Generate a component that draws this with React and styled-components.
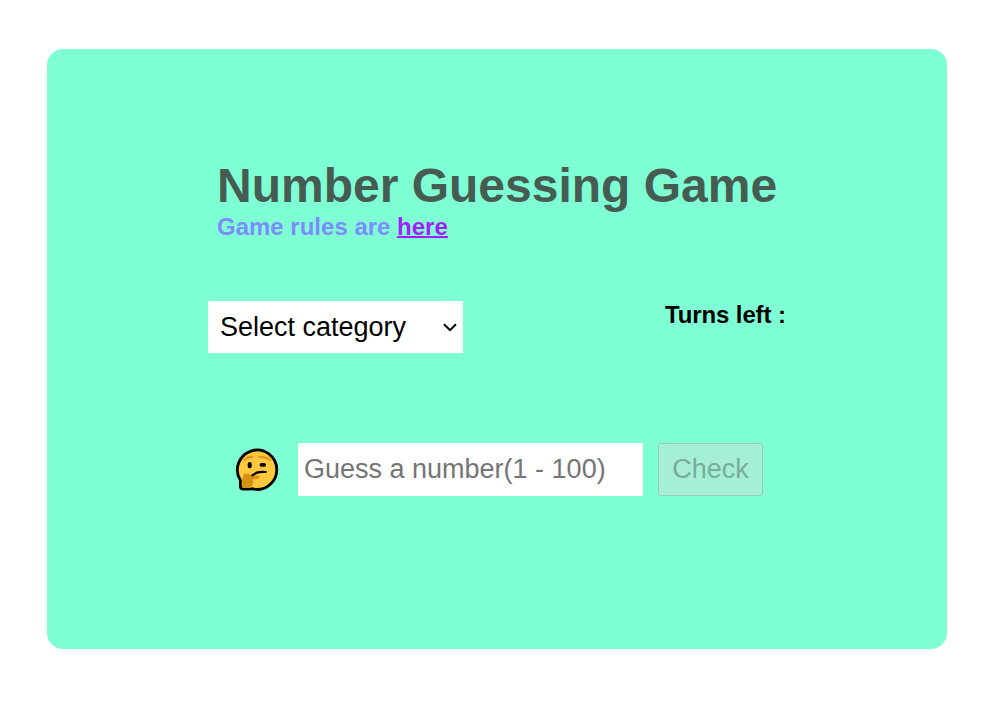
import React from "react";
import styled, { createGlobalStyle } from "styled-components";

const GlobalStyle = createGlobalStyle`
  * { box-sizing: border-box; }
  body {
    margin: 0;
    background: #fff;
    font-family: "Liberation Sans", Arial, sans-serif;
  }
`;

const Page = styled.div`
  height: 702px;
  padding: 49px 0 0 47px;
`;

const Card = styled.main`
  width: 900px;
  height: 600px;
  padding: 109px 161px 0;
  border-radius: 16px;
  background: #7fffd4;
`;

const Header = styled.header`
  padding-left: 9px;
  white-space: nowrap;
`;

const Title = styled.h1`
  margin: 0;
  font-size: 48px;
  line-height: 55px;
  color: #465c53;
`;

const Rules = styled.p`
  margin: 0;
  font-size: 24px;
  font-weight: bold;
  line-height: 28px;
  color: #7b8cff;
`;

const RulesLink = styled.a`
  color: #a41dfb;
  text-decoration: underline;
  text-decoration-thickness: 2px;
`;

const Options = styled.section`
  display: flex;
  justify-content: space-between;
  margin-top: 60px;
`;

const SelectWrap = styled.div`
  position: relative;
  width: 255px;
  height: 52px;
`;

const Select = styled.select`
  appearance: none;
  width: 100%;
  height: 100%;
  padding: 0 30px 0 12px;
  border: 0;
  border-radius: 0;
  background: #fff;
  color: #000;
  font: 27px "Liberation Sans", Arial, sans-serif;
`;

const Chevron = styled.svg`
  position: absolute;
  right: 6px;
  top: 22px;
  pointer-events: none;
`;

const Turns = styled.p`
  margin: 0 -2px 0 0;
  width: 123px;
  font-size: 24px;
  font-weight: bold;
  letter-spacing: -0.12px;
  line-height: 28px;
  white-space: nowrap;
`;

const GuessRow = styled.form`
  display: flex;
  align-items: center;
  margin: 90px 0 0 27px;
`;

const Face = styled.svg`
  flex: none;
  margin-right: 18px;
`;

const GuessInput = styled.input`
  width: 345px;
  height: 53px;
  margin-right: 15px;
  padding: 0 6px;
  border: 0;
  background: #fff;
  font: 27px "Liberation Sans", Arial, sans-serif;
  &::placeholder { color: #757575; opacity: 1; }
`;

const CheckButton = styled.button`
  width: 105px;
  height: 53px;
  padding: 0;
  border: 1px solid #94cab6;
  border-radius: 3px;
  background: #a6efd7;
  color: #78ad9b;
  font: 27px "Liberation Sans", Arial, sans-serif;
`;

function ThinkingFace() {
  return (
    <Face width="45" height="45" viewBox="0 0 45 45" aria-label="Thinking face">
      <path
        d="M16.800 41.700A19.700 19.700 0 1 0 5.400 33.200V39.200C5.400 41.300 6.400 42.200 8.400 42.200H13.500C14.700 42.200 15.700 42.100 16.800 41.700Z"
        fill="#ffc83d"
        stroke="#000"
        strokeWidth="2.800"
        strokeLinejoin="round"
      />
      <path
        d="M8.300 28.400c.2-1.500 1.300-1.800 2.600-1.700h2.600c1.300 0 1.700.8 1.900 1.900l7-.2c2.800.1 2.900 3.100.3 3.400l-4.700.7c.9 3.500-.7 8.300-5 8.300H9.300c-1.800 0-2.500-.9-2.500-2.600l.1-5.700c.1-1.500 1.300-2.300 1.400-4.100Z"
        fill="#d99114"
      />
      <path
        d="M9.500 13c1.600-2.200 4.300-3.100 7.900-3M24.300 9.800c4.400-.2 7.900.7 10.800 3.200"
        fill="none"
        stroke="#e09a1c"
        strokeWidth="2.300"
        strokeLinecap="round"
      />
      <rect x="12.700" y="14.900" width="4" height="6.300" rx="2" fill="#000" />
      <rect x="24.600" y="15.900" width="6.400" height="3.900" rx="1.950" fill="#000" />
      <path
        d="M17.300 28.300c2.100-.8 3.100-2.300 5.400-2.900 2.400-.7 5-.7 8-.4"
        fill="none"
        stroke="#000"
        strokeWidth="2.200"
        strokeLinecap="round"
      />
    </Face>
  );
}

export default function App() {
  return (
    <>
      <GlobalStyle />
      <Page>
        <Card>
          <Header>
            <Title>Number Guessing Game</Title>
            <Rules>
              Game rules are <RulesLink href="#rules">here</RulesLink>
            </Rules>
          </Header>
          <Options>
            <SelectWrap>
              <Select aria-label="Category">
                <option>Select category</option>
              </Select>
              <Chevron width="14" height="9" viewBox="0 0 14 9">
                <path d="M1 1.200 7 7.200l6-6" fill="none" stroke="#000" strokeWidth="2" />
              </Chevron>
            </SelectWrap>
            <Turns>Turns left :</Turns>
          </Options>
          <GuessRow>
            <ThinkingFace />
            <GuessInput placeholder="Guess a number(1 - 100)" />
            <CheckButton type="button" disabled>Check</CheckButton>
          </GuessRow>
        </Card>
      </Page>
    </>
  );
}
